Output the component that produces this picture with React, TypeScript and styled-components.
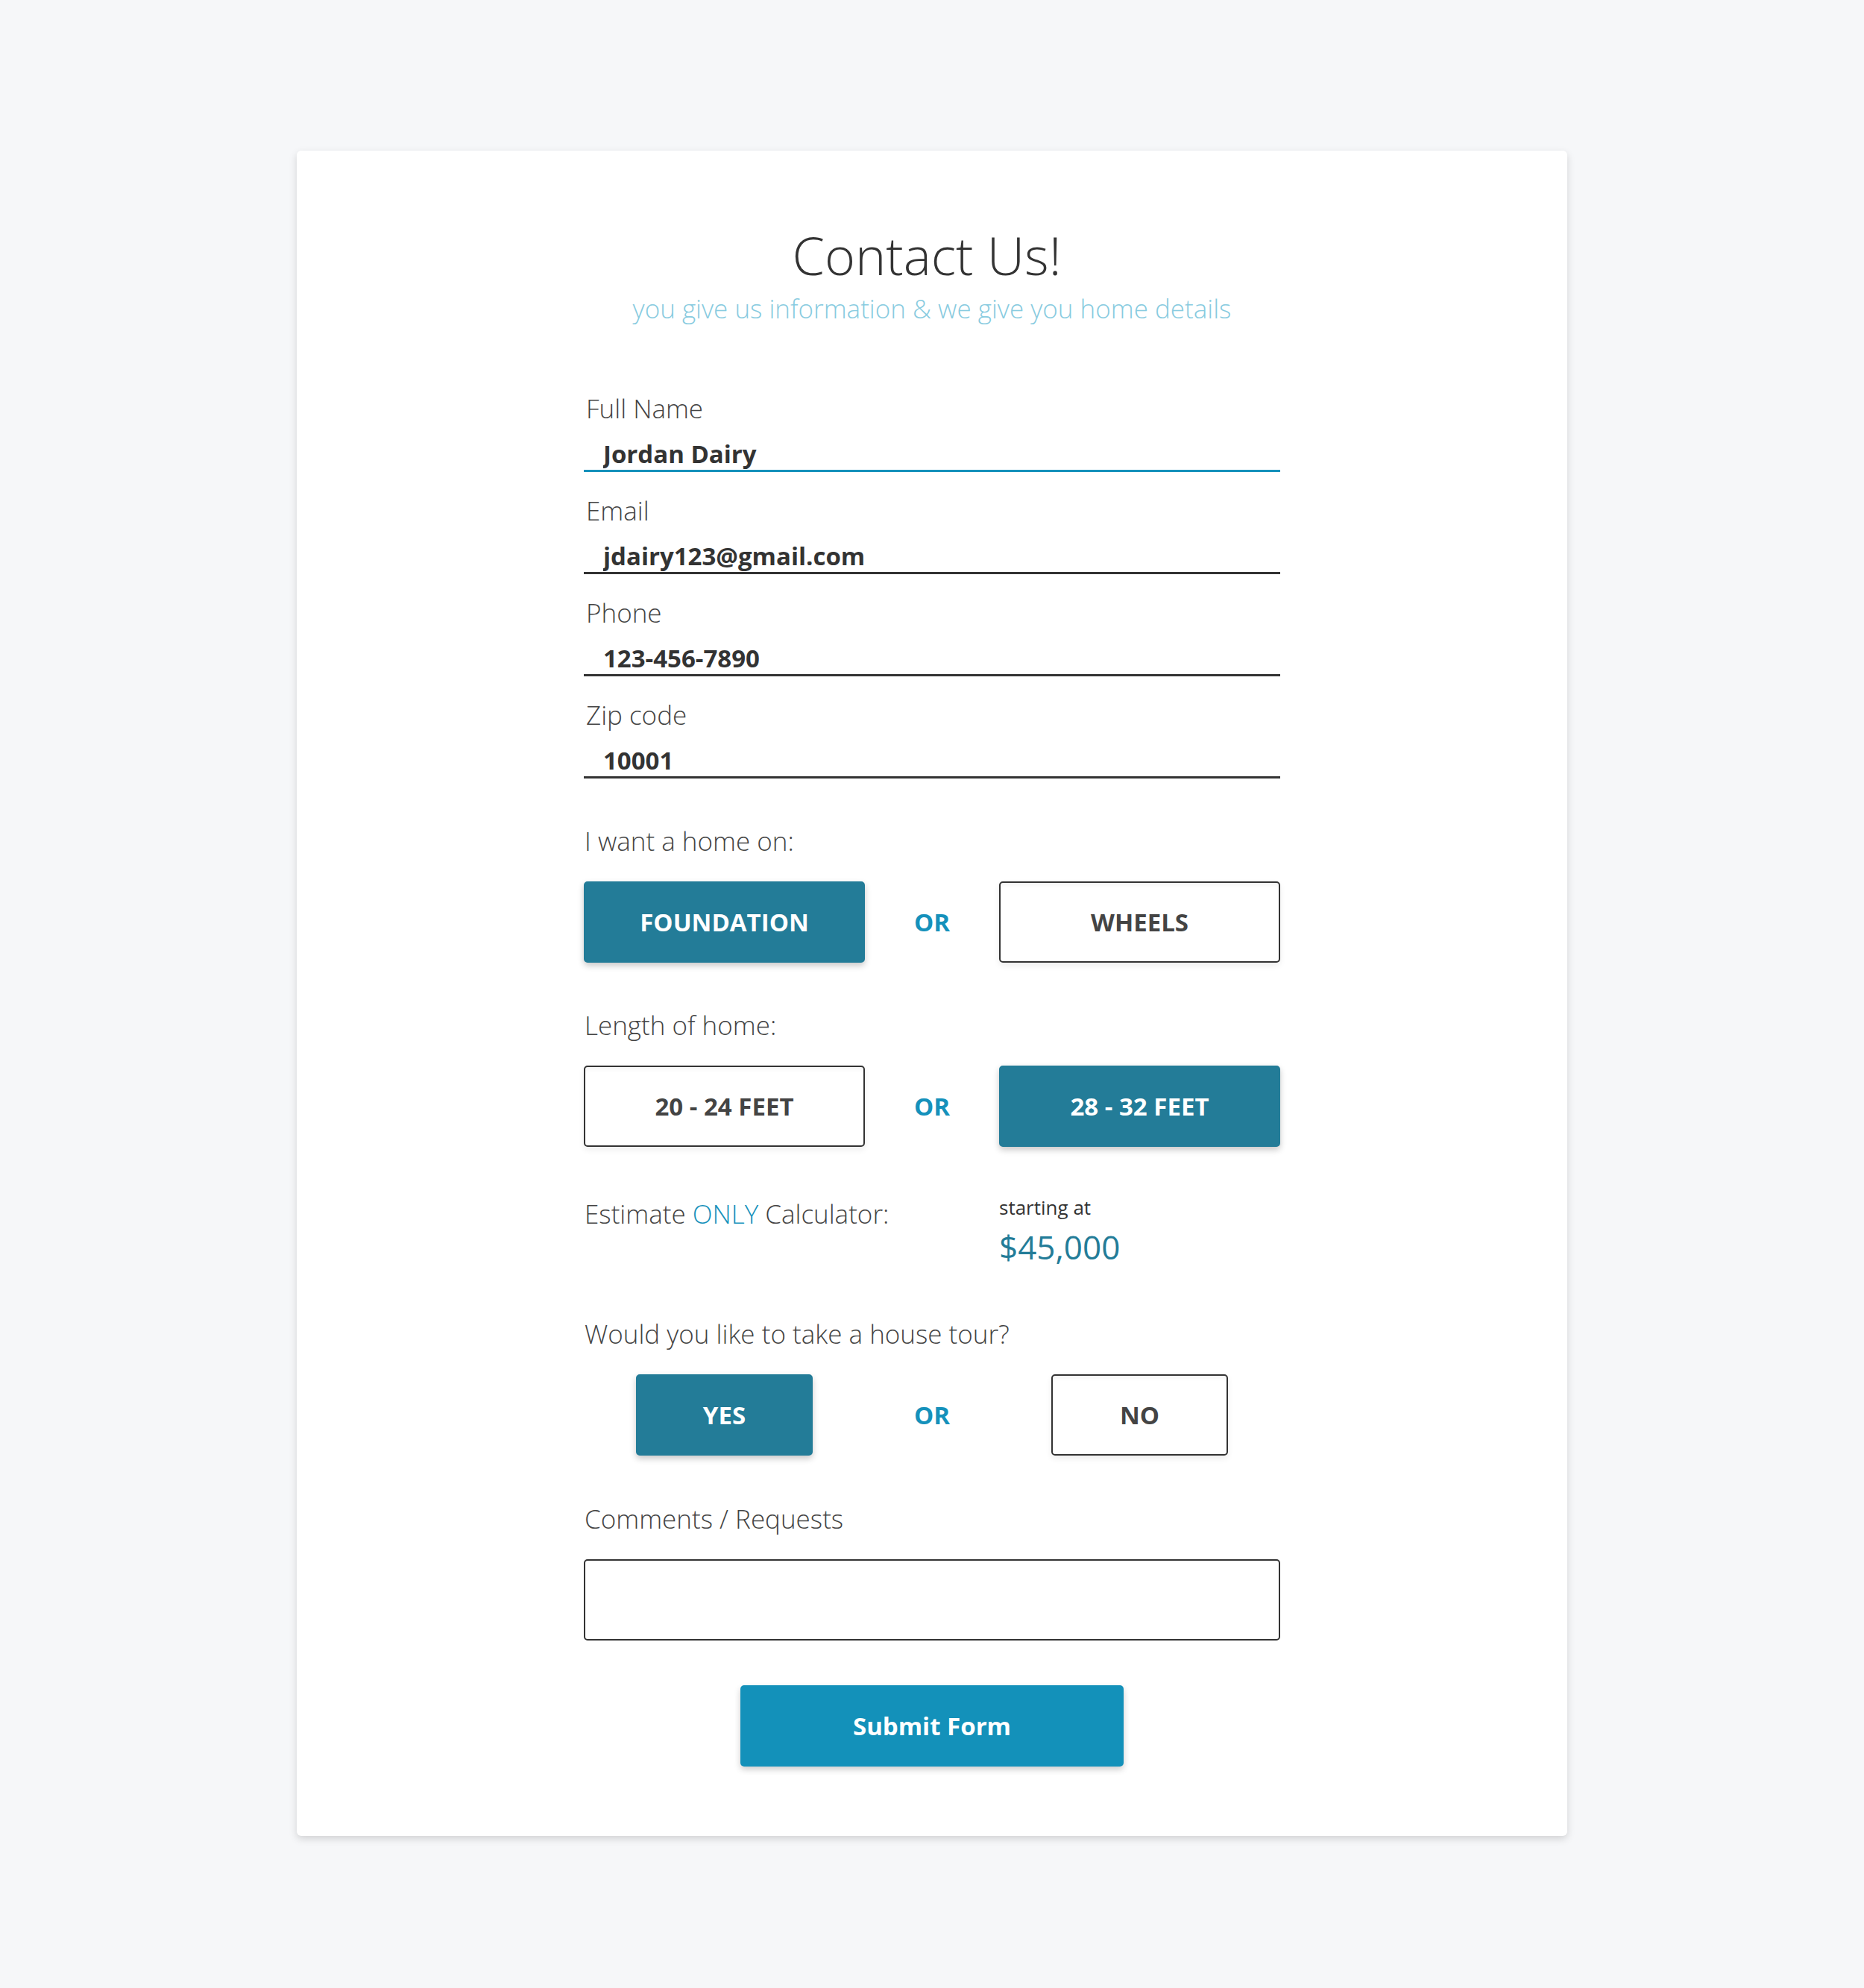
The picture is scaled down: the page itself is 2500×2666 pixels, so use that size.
import React from "react";
import styled, { createGlobalStyle, css } from "styled-components";

const GlobalStyle = createGlobalStyle`
  html, body {
    margin: 0;
    padding: 0;
    background: #f6f7f9;
  }
  body {
    font-family: "Open Sans", "Noto Sans", "Liberation Sans", sans-serif;
    color: #333;
  }
  *, *::before, *::after {
    box-sizing: border-box;
  }
`;

const Page = styled.main`
  padding: 202px 0 204px;
`;

const Card = styled.section`
  width: 1704px;
  margin: 0 auto;
  background: #fff;
  border-radius: 6px;
  box-shadow: 0 4px 11px rgba(0, 0, 0, 0.15);
  padding: 103px 0 93px;
`;

const Header = styled.header`
  text-align: center;
`;

const Title = styled.h1`
  margin: 0;
  padding-right: 14px;
  font-weight: 300;
  font-size: 70px;
  line-height: 74px;
  color: #333;
`;

const Subtitle = styled.p`
  margin: 15px 0 0;
  font-weight: 300;
  font-size: 35px;
  line-height: 40px;
  color: #88cbe0;
`;

const Form = styled.form`
  width: 934px;
  margin: 94px auto 0;
  display: flex;
  flex-direction: column;
`;

const Fields = styled.div`
  display: flex;
  flex-direction: column;
  gap: 32px;
`;

const Field = styled.label`
  display: flex;
  flex-direction: column;
`;

const LabelText = styled.span`
  padding-left: 3px;
  font-weight: 300;
  font-size: 35px;
  line-height: 40px;
  color: #444;
`;

const TextInput = styled.input<{ $focused?: boolean }>`
  margin-top: 20px;
  height: 45px;
  width: 100%;
  padding: 0 0 2px 26px;
  border: none;
  border-bottom: 3px solid ${(p) => (p.$focused ? "#1591bb" : "#333")};
  border-radius: 0;
  outline: none;
  background: transparent;
  font-family: inherit;
  font-weight: 700;
  font-size: 33px;
  color: #333;
`;

const Section = styled.div<{ $gap?: number }>`
  margin-top: ${(p) => p.$gap ?? 64}px;
  display: flex;
  flex-direction: column;
`;

const SectionLabel = styled.div`
  padding-left: 1px;
  font-weight: 300;
  font-size: 35px;
  line-height: 40px;
  color: #444;
`;

const ChoiceRow = styled.div`
  margin-top: 34px;
  display: grid;
  grid-template-columns: 377px 1fr 377px;
  align-items: center;
  justify-items: center;
`;

const ChoiceButton = styled.button<{ $selected?: boolean; $compact?: boolean }>`
  width: ${(p) => (p.$compact ? "237px" : "100%")};
  height: 109px;
  border-radius: 5px;
  font-family: inherit;
  font-weight: 700;
  font-size: 33px;
  cursor: pointer;
  ${(p) =>
    p.$selected
      ? css`
          background: #237c98;
          color: #fff;
          border: 2px solid #237c98;
          box-shadow: 0 4px 9px rgba(0, 0, 0, 0.22);
        `
      : css`
          background: #fff;
          color: #444;
          border: 2px solid #333;
          box-shadow: 0 4px 9px rgba(0, 0, 0, 0.07),
            inset 0 7px 7px -5px rgba(0, 0, 0, 0.06);
        `}
`;

const OrText = styled.span`
  font-weight: 700;
  font-size: 33px;
  color: #1591bb;
`;

const EstimateRow = styled.div`
  margin-top: 65px;
  display: grid;
  grid-template-columns: 1fr 377px;
  align-items: start;
`;

const EstimateLabel = styled.div`
  padding: 5px 0 0 1px;
  font-weight: 300;
  font-size: 35px;
  line-height: 40px;
  color: #444;
`;

const Accent = styled.span`
  color: #1591bb;
`;

const PriceBox = styled.div`
  display: flex;
  flex-direction: column;
`;

const PriceCaption = styled.span`
  font-weight: 400;
  font-size: 26px;
  line-height: 32px;
  color: #333;
`;

const Price = styled.span`
  margin-top: 10px;
  font-weight: 400;
  font-size: 44px;
  line-height: 54px;
  color: #237c98;
`;

const Comments = styled.textarea`
  margin-top: 34px;
  width: 100%;
  height: 109px;
  border: 2px solid #333;
  border-radius: 5px;
  resize: none;
  padding: 16px 24px;
  font-family: inherit;
  font-size: 30px;
  color: #333;
  outline: none;
`;

const SubmitButton = styled.button`
  display: block;
  margin: 60px auto 0;
  width: 514px;
  height: 109px;
  border: none;
  border-radius: 5px;
  background: #1391ba;
  color: #fff;
  font-family: inherit;
  font-weight: 700;
  font-size: 33px;
  box-shadow: 0 4px 9px rgba(0, 0, 0, 0.2);
  cursor: pointer;
`;

export default function App() {
  return (
    <>
      <GlobalStyle />
      <Page>
        <Card>
          <Header>
            <Title>Contact Us!</Title>
            <Subtitle>you give us information &amp; we give you home details</Subtitle>
          </Header>
          <Form onSubmit={(e) => e.preventDefault()}>
            <Fields>
              <Field>
                <LabelText>Full Name</LabelText>
                <TextInput $focused defaultValue="Jordan Dairy" />
              </Field>
              <Field>
                <LabelText>Email</LabelText>
                <TextInput defaultValue="jdairy123@gmail.com" />
              </Field>
              <Field>
                <LabelText>Phone</LabelText>
                <TextInput defaultValue="123-456-7890" />
              </Field>
              <Field>
                <LabelText>Zip code</LabelText>
                <TextInput defaultValue="10001" />
              </Field>
            </Fields>

            <Section>
              <SectionLabel>I want a home on:</SectionLabel>
              <ChoiceRow>
                <ChoiceButton type="button" $selected>FOUNDATION</ChoiceButton>
                <OrText>OR</OrText>
                <ChoiceButton type="button">WHEELS</ChoiceButton>
              </ChoiceRow>
            </Section>

            <Section>
              <SectionLabel>Length of home:</SectionLabel>
              <ChoiceRow>
                <ChoiceButton type="button">20 - 24 FEET</ChoiceButton>
                <OrText>OR</OrText>
                <ChoiceButton type="button" $selected>28 - 32 FEET</ChoiceButton>
              </ChoiceRow>
            </Section>

            <EstimateRow>
              <EstimateLabel>
                Estimate <Accent>ONLY</Accent> Calculator:
              </EstimateLabel>
              <PriceBox>
                <PriceCaption>starting at</PriceCaption>
                <Price>$45,000</Price>
              </PriceBox>
            </EstimateRow>

            <Section $gap={70}>
              <SectionLabel>Would you like to take a house tour?</SectionLabel>
              <ChoiceRow>
                <ChoiceButton type="button" $selected $compact>YES</ChoiceButton>
                <OrText>OR</OrText>
                <ChoiceButton type="button" $compact>NO</ChoiceButton>
              </ChoiceRow>
            </Section>

            <Section $gap={65}>
              <SectionLabel>Comments / Requests</SectionLabel>
              <Comments />
            </Section>

            <SubmitButton type="submit">Submit Form</SubmitButton>
          </Form>
        </Card>
      </Page>
    </>
  );
}
